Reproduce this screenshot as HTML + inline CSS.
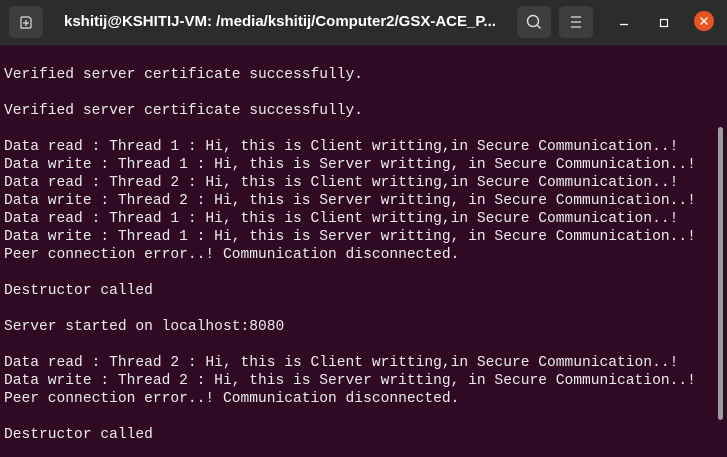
<!DOCTYPE html>
<html><head><meta charset="utf-8"><style>
body{margin:0;width:727px;height:457px;overflow:hidden;background:#300a24;position:relative;font-family:"Liberation Sans",sans-serif}
.tb{position:absolute;left:0;top:0;width:727px;height:45px;background:#2c2c2c;border-bottom:1px solid #1f1f1f}
.btn{position:absolute;top:6px;width:34px;height:32px;background:#3d3d3d;border-radius:5px}
.title{position:absolute;left:64px;top:13px;color:#fff;font-weight:bold;font-size:15px;white-space:nowrap}
pre{position:absolute;left:4px;top:66px;margin:0;font-family:"Liberation Mono","DejaVu Sans Mono",monospace;font-size:14.6px;line-height:18px;color:#ececec}
.sb{position:absolute;left:718px;top:127px;width:5px;height:293px;background:#9c9c9c;border-radius:3px}
</style></head><body>
<div class="tb">
<div class="btn" style="left:9px"><svg width="34" height="32"><path d="M12 11h8l2 2v9M12 11v11h10" fill="none" stroke="#ddd" stroke-width="1.2"/><path d="M17 14v6M14 17h6" stroke="#ddd" stroke-width="1.2"/></svg></div>
<div class="title">kshitij@KSHITIJ-VM: /media/kshitij/Computer2/GSX-ACE_P...</div>
<div class="btn" style="left:517px"><svg width="34" height="32"><circle cx="16" cy="15" r="5.5" fill="none" stroke="#ddd" stroke-width="1.4"/><path d="M20 19l3.5 3.5" stroke="#ddd" stroke-width="1.4"/></svg></div>
<div class="btn" style="left:559px"><svg width="34" height="32"><path d="M12 11h10M12 16h10M12 21h10" stroke="#ddd" stroke-width="1.3"/></svg></div>
<svg style="position:absolute;left:612px;top:10px" width="110" height="25"><path d="M8 14.5h8" stroke="#fff" stroke-width="1.3"/><rect x="48.5" y="9.5" width="7" height="7" fill="none" stroke="#fff" stroke-width="1.2"/><circle cx="92" cy="11" r="10" fill="#e95420"/><path d="M88.5 7.5l7 7M95.5 7.5l-7 7" stroke="#fff" stroke-width="1.4"/></svg>
</div>
<pre>Verified server certificate successfully.

Verified server certificate successfully.

Data read : Thread 1 : Hi, this is Client writting,in Secure Communication..!
Data write : Thread 1 : Hi, this is Server writting, in Secure Communication..!
Data read : Thread 2 : Hi, this is Client writting,in Secure Communication..!
Data write : Thread 2 : Hi, this is Server writting, in Secure Communication..!
Data read : Thread 1 : Hi, this is Client writting,in Secure Communication..!
Data write : Thread 1 : Hi, this is Server writting, in Secure Communication..!
Peer connection error..! Communication disconnected.

Destructor called

Server started on localhost:8080

Data read : Thread 2 : Hi, this is Client writting,in Secure Communication..!
Data write : Thread 2 : Hi, this is Server writting, in Secure Communication..!
Peer connection error..! Communication disconnected.

Destructor called</pre>
<div class="sb"></div>
</body></html>
